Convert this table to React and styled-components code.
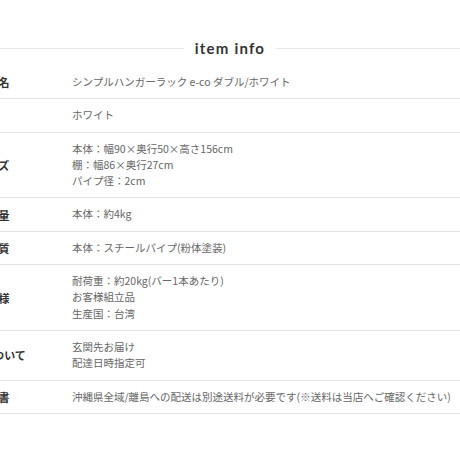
import React from "react";
import styled, { createGlobalStyle } from "styled-components";

const GlobalStyle = createGlobalStyle`
  html, body {
    margin: 0;
    padding: 0;
    background: #fff;
    overflow: hidden;
  }
  body {
    font-family: "Noto Sans CJK JP", "Noto Sans", sans-serif;
  }
`;

const Page = styled.div`
  width: 460px;
  padding-top: 38px;
`;

const Heading = styled.div`
  display: flex;
  align-items: center;
  gap: 11px;
  height: 20px;
  margin-bottom: 8px;
`;

const Rule = styled.div`
  flex: 1;
  height: 1px;
  background: #e8e8e8;
`;

const Title = styled.h2`
  margin: 0;
  font-family: "Lato", "DejaVu Sans", sans-serif;
  font-weight: 700;
  font-size: 15px;
  letter-spacing: 1.2px;
  line-height: 20px;
  color: #333;
`;

const Table = styled.div`
  margin-left: -57px;
  width: 540px;
`;

const Row = styled.div`
  display: flex;
  border-bottom: 1px solid #e4e4e4;
`;

const Label = styled.div`
  flex: 0 0 100px;
  display: flex;
  align-items: center;
  justify-content: center;
  font-size: 11px;
  font-weight: 700;
  color: #333;
  white-space: nowrap;
`;

const Value = styled.div`
  flex: 1;
  padding: 8px 0 8px 29px;
  font-size: 10.5px;
  line-height: 16.3px;
  color: #666;
  white-space: nowrap;
`;

const rows = [
  { label: "商品名", lines: ["シンプルハンガーラック e-co ダブル/ホワイト"] },
  { label: "色", lines: ["ホワイト"] },
  {
    label: "サイズ",
    lines: ["本体：幅90×奥行50×高さ156cm", "棚：幅86×奥行27cm", "パイプ径：2cm"],
  },
  { label: "重　量", lines: ["本体：約4kg"] },
  { label: "材　質", lines: ["本体：スチールパイプ(粉体塗装)"] },
  {
    label: "仕　様",
    lines: ["耐荷重：約20kg(バー1本あたり)", "お客様組立品", "生産国：台湾"],
  },
  { label: "配送について", lines: ["玄関先お届け", "配達日時指定可"] },
  {
    label: "注意書",
    lines: ["沖縄県全域/離島への配送は別途送料が必要です(※送料は当店へご確認ください)"],
  },
];

export default function App() {
  return (
    <Page>
      <GlobalStyle />
      <Heading>
        <Rule />
        <Title>item info</Title>
        <Rule />
      </Heading>
      <Table>
        {rows.map((row) => (
          <Row key={row.label}>
            <Label>{row.label}</Label>
            <Value>
              {row.lines.map((line) => (
                <div key={line}>{line}</div>
              ))}
            </Value>
          </Row>
        ))}
      </Table>
    </Page>
  );
}
